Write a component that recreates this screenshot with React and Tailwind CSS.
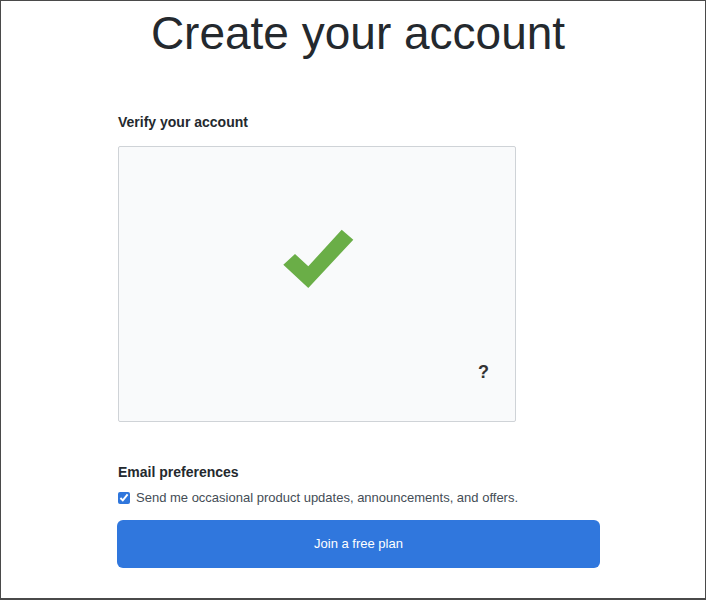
import React, { useState } from 'react';

const font = { fontFamily: '"Liberation Sans", Arial, sans-serif' };

const CheckMark = () => (
    <svg width="72" height="60" viewBox="283 231 72 60" className="block">
        <polygon
            points="283.3,266.7 295,256 308.3,268.3 341.7,231.7 353.3,241.7 308.3,290"
            fill="#6aae47"
        />
    </svg>
);

const App = () => {
    const [optIn, setOptIn] = useState(true);

    return (
        <div
            className="w-[706px] h-[600px] bg-white border-l border-t border-r border-b-2 border-[#4a4a4a] overflow-hidden text-[#24292e]"
            style={font}
        >
            <h1 className="pt-[9px] text-center text-[46px] leading-none font-normal pl-[10px] text-[#24292e]">
                Create your account
            </h1>

            <div className="ml-[116px] w-[483px] mt-[56px]">
                <h2 className="text-sm leading-5 font-bold ml-px">Verify your account</h2>

                <div className="mt-[14px] ml-px w-[398px] h-[276px] border border-[#cfd3d7] rounded-[2px] bg-[#f9fafb] flex flex-col items-center pt-[82px] pr-[26px]">
                    <div className="pl-[29px]">
                        <CheckMark />
                    </div>
                    <span className="self-end mt-[71px] text-lg leading-6 font-bold text-[#333]">?</span>
                </div>

                <h2 className="mt-[40px] text-sm leading-5 font-bold ml-px">Email preferences</h2>

                <label className="mt-[8px] flex items-center gap-[6px] ml-px text-[13px] leading-4 text-[#444d56]">
                    <input
                        type="checkbox"
                        checked={optIn}
                        onChange={() => setOptIn(!optIn)}
                        className="w-[12px] h-[12px] m-0 accent-[#2f76dc]"
                    />
                    Send me occasional product updates, announcements, and offers.
                </label>

                <button
                    type="button"
                    className="mt-[14px] w-full h-[48px] rounded-md bg-[#3077dd] text-white text-[13px] font-medium"
                >
                    Join a free plan
                </button>
            </div>
        </div>
    );
};

export default App;
